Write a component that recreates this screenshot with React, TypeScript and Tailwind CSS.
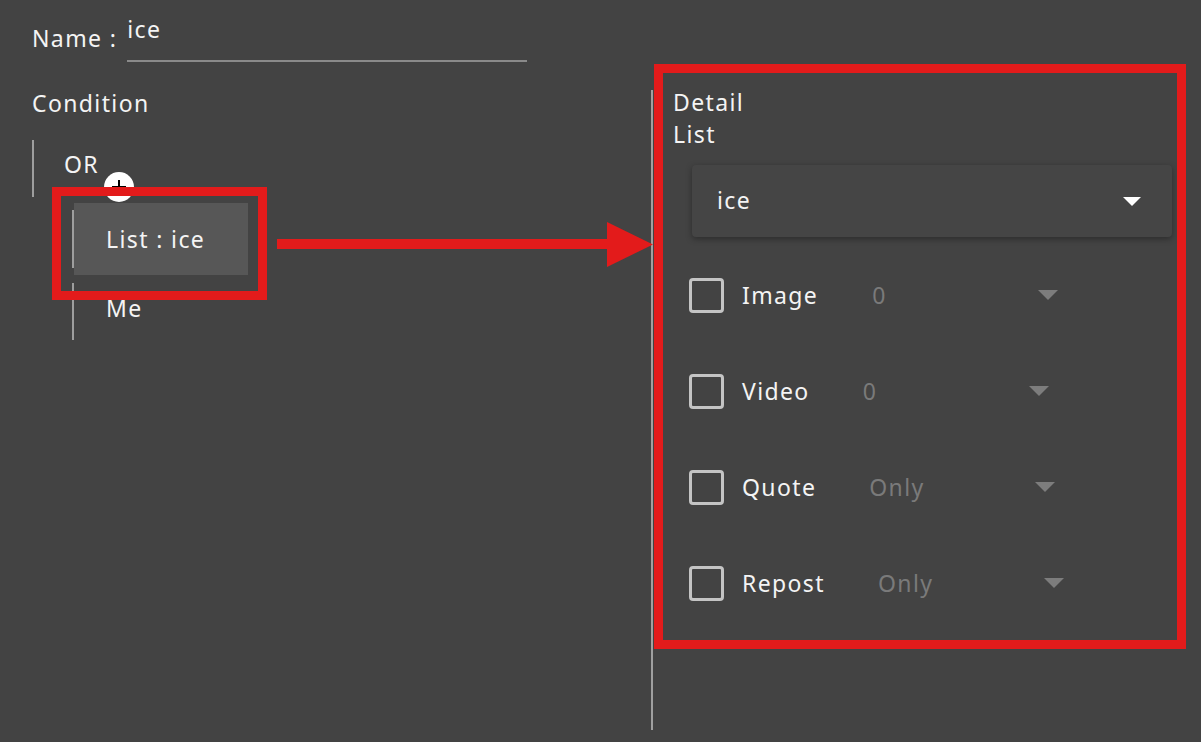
import React from "react";

const Caret = ({ className }: { className?: string }) => (
  <svg width="20" height="10" viewBox="0 0 20 10" className={className}>
    <path d="M0 0 L20 0 L10 10 Z" fill="currentColor" />
  </svg>
);

const Row = ({ label, value, gap }: { label: string; value: string; gap: string }) => (
  <div className="flex items-center h-[48px]">
    <div className="w-[35px] h-[35px] rounded-[4px] border-[3px] border-[#c4c4c4]" />
    <span className="ml-[18px] text-[#f4f4f4]">{label}</span>
    <div className={`flex items-center justify-between w-[186px] ${gap}`}>
      <span className="text-[#7a7a7a]">{value}</span>
      <Caret className="text-[#7d7d7d]" />
    </div>
  </div>
);

export default function App() {
  return (
    <div className="relative w-[1201px] h-[742px] overflow-hidden bg-[#434343] text-[23px] leading-[32px] tracking-[0.06em] text-[#f4f4f4] font-['Noto_Sans','Open_Sans',sans-serif] flex">
      {/* left: name + condition tree */}
      <div className="w-[651px] pl-[32px] pt-[20px]">
        <div className="flex items-start">
          <span className="mt-[2px]">Name :</span>
          <div className="ml-[10px] w-[400px] h-[42px] border-b-2 border-[#8a8a8a]">
            <span className="block -mt-[7px]">ice</span>
          </div>
        </div>
        <div className="mt-[25px]">Condition</div>

        <div className="mt-[21px] w-[2px] h-[57px] bg-[#9e9e9e] flex">
          <span className="ml-[32px] mt-[8px] whitespace-nowrap">OR</span>
        </div>
        <div className="ml-[40px] mt-[6px] flex flex-col">
          <div className="flex items-center h-[72px]">
            <div className="w-[2px] h-[58px] bg-[#9e9e9e]" />
            <div className="w-[174px] h-[72px] bg-[#575757] flex items-center pl-[32px]">List : ice</div>
          </div>
          <div className="flex items-center h-[57px] mt-[8px] border-l-2 border-[#9e9e9e]">
            <span className="ml-[32px] mb-[8px]">Me</span>
          </div>
        </div>
      </div>

      {/* divider */}
      <div className="w-[2px] h-[640px] mt-[90px] bg-[#a0a0a0]" />

      {/* right: detail panel */}
      <div className="flex-1 pl-[20px] pt-[86px]">
        <div>Detail</div>
        <div>List</div>
        <div className="ml-[19px] mt-[15px] w-[480px] h-[72px] rounded-[4px] bg-[#454545] shadow-[0_2px_6px_rgba(0,0,0,0.35)] flex items-center justify-between pl-[25px] pr-[31px]">
          <span className="-mt-[3px]">ice</span>
          <Caret className="text-white w-[18px] h-[9px]" />
        </div>
        <div className="ml-[16px] mt-[34px] flex flex-col gap-[48px]">
          <Row label="Image" value="0" gap="ml-[54px]" />
          <Row label="Video" value="0" gap="ml-[53px]" />
          <Row label="Quote" value="Only" gap="ml-[53px]" />
          <Row label="Repost" value="Only" gap="ml-[53px]" />
        </div>
      </div>

      {/* annotations */}
      <div className="absolute left-[104px] top-[172px] w-[30px] h-[30px] rounded-full bg-white flex items-center justify-center">
        <div className="relative w-[14px] h-[14px]">
          <div className="absolute left-[6px] top-0 w-[2px] h-[14px] bg-black" />
          <div className="absolute top-[6px] left-0 w-[14px] h-[2px] bg-black" />
        </div>
      </div>
      <div className="absolute left-[52px] top-[187px] w-[215px] h-[113px] border-[9px] border-[#e31b1b]" />
      <div className="absolute left-[654px] top-[64px] w-[532px] h-[585px] border-[9px] border-[#e31b1b]" />
      <div className="absolute left-[277px] top-[239px] w-[332px] h-[10px] bg-[#e31b1b]" />
      <svg className="absolute left-[607px] top-[222px]" width="46" height="45" viewBox="0 0 46 45">
        <path d="M0 0 L46 22.5 L0 45 Z" fill="#e31b1b" />
      </svg>
    </div>
  );
}
